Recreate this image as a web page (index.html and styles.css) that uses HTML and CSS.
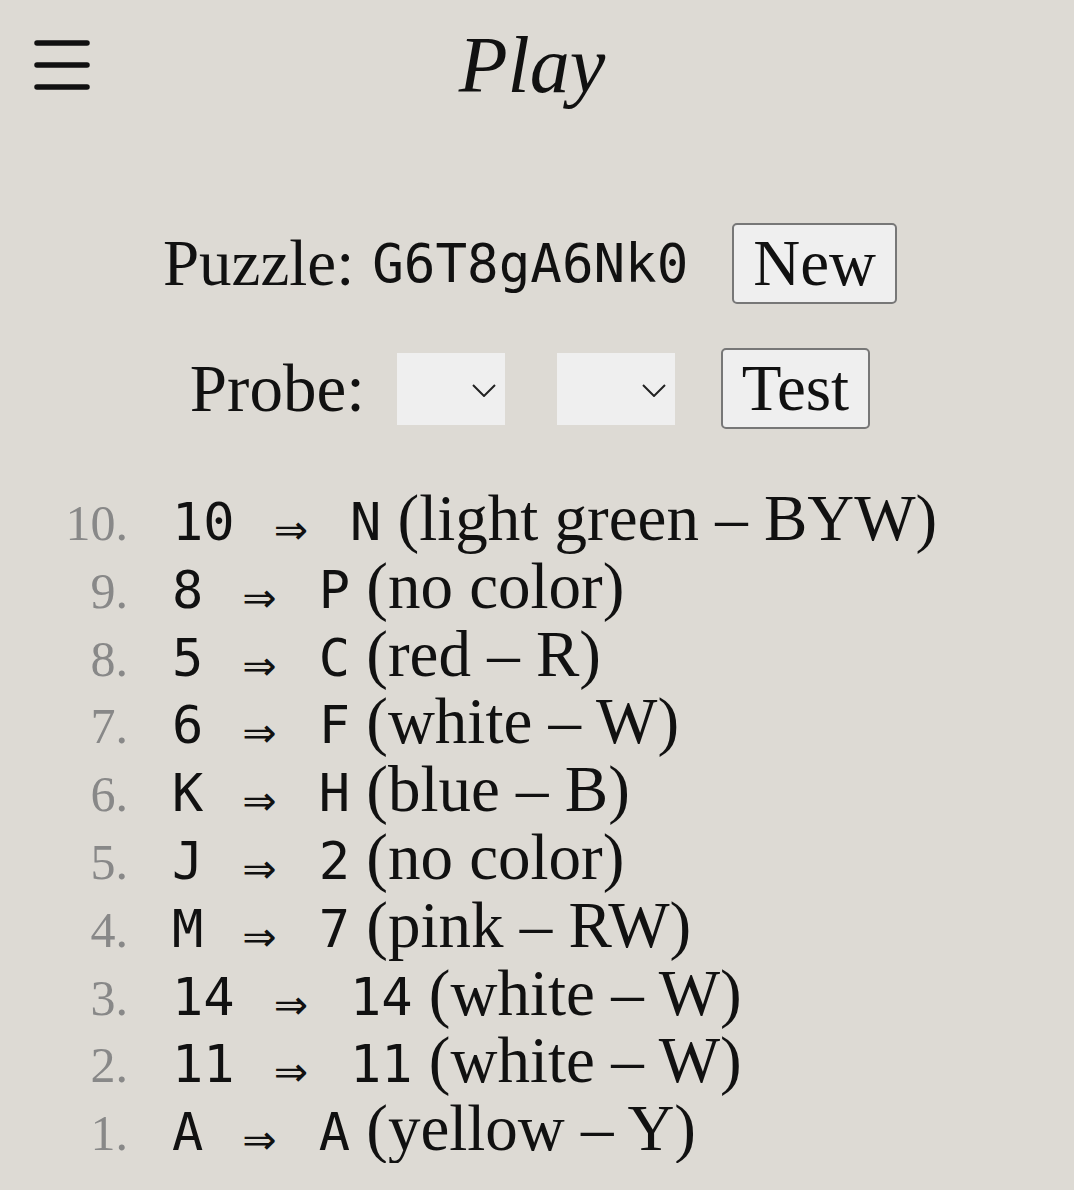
FILE: index.html
```html
<!DOCTYPE html>
<html lang="en">
<head>
    <meta charset="UTF-8">
    <meta name="viewport" content="width=device-width, initial-scale=1.0">
    <title>Play</title>
    <link rel="stylesheet" href="styles.css">
</head>
<body>
    <header class="topbar">
        <button class="menu-btn" aria-label="Menu">
            <svg width="56" height="50" viewBox="0 0 56 50">
                <path d="M3 3H53M3 25H53M3 47H53" stroke="#111" stroke-width="5.5" stroke-linecap="round" fill="none"/>
            </svg>
        </button>
        <h1 class="title">Play</h1>
        <span></span>
    </header>

    <main class="play">
        <div class="row puzzle-row">
            <span class="label">Puzzle:</span>
            <code class="puzzle-id">G6T8gA6Nk0</code>
            <button class="btn" id="newPuzzle">New</button>
        </div>

        <div class="row probe-row">
            <span class="label">Probe:</span>
            <span class="select-wrap pick-a">
                <select id="probeFrom"></select>
                <svg class="chevron" width="24" height="13" viewBox="0 0 24 13"><path d="M1 1L12 12L23 1" stroke="#222" stroke-width="2" fill="none"/></svg>
            </span>
            <span class="select-wrap pick-b">
                <select id="probeTo"></select>
                <svg class="chevron" width="24" height="13" viewBox="0 0 24 13"><path d="M1 1L12 12L23 1" stroke="#222" stroke-width="2" fill="none"/></svg>
            </span>
            <button class="btn" id="testProbe">Test</button>
        </div>

        <ol class="history" reversed>
            <li><span class="num">10.</span><code class="sym">10</code><span class="arrow">⇒</span><code class="sym">N</code> (light green – BYW)</li>
            <li><span class="num">9.</span><code class="sym">8</code><span class="arrow">⇒</span><code class="sym">P</code> (no color)</li>
            <li><span class="num">8.</span><code class="sym">5</code><span class="arrow">⇒</span><code class="sym">C</code> (red – R)</li>
            <li><span class="num">7.</span><code class="sym">6</code><span class="arrow">⇒</span><code class="sym">F</code> (white – W)</li>
            <li><span class="num">6.</span><code class="sym">K</code><span class="arrow">⇒</span><code class="sym">H</code> (blue – B)</li>
            <li><span class="num">5.</span><code class="sym">J</code><span class="arrow">⇒</span><code class="sym">2</code> (no color)</li>
            <li><span class="num">4.</span><code class="sym">M</code><span class="arrow">⇒</span><code class="sym">7</code> (pink – RW)</li>
            <li><span class="num">3.</span><code class="sym">14</code><span class="arrow">⇒</span><code class="sym">14</code> (white – W)</li>
            <li><span class="num">2.</span><code class="sym">11</code><span class="arrow">⇒</span><code class="sym">11</code> (white – W)</li>
            <li><span class="num">1.</span><code class="sym">A</code><span class="arrow">⇒</span><code class="sym">A</code> (yellow – Y)</li>
        </ol>
    </main>
</body>
</html>
```

FILE: styles.css
```css
body {
    margin: 0;
    background-color: #dddad4;
    font-family: "Liberation Serif", serif;
    font-size: 65px;
    color: #111;
}
.topbar {
    display: grid;
    grid-template-columns: 1fr auto 1fr;
    height: 130px;
    padding-right: 10px;
}
.menu-btn {
    justify-self: start;
    align-self: start;
    display: block;
    margin: 40px 0 0 34px;
    padding: 0;
    border: none;
    background: none;
}
.menu-btn svg {
    display: block;
}
.title {
    margin: 0;
    font-size: 80px;
    font-style: italic;
    font-weight: normal;
    line-height: 130px;
}
.row {
    display: flex;
    justify-content: center;
    align-items: center;
    height: 81px;
    padding-right: 14px;
}
.puzzle-row {
    margin-top: 93px;
}
.puzzle-row .label {
    margin-right: 18px;
}
.puzzle-id {
    font-family: "DejaVu Sans Mono", monospace;
    font-size: 52.5px;
}
.puzzle-row .btn {
    margin-left: 44px;
}
.btn {
    font-family: inherit;
    font-size: 65px;
    line-height: 1.15;
    padding: 1px 19px;
    background-color: #efefef;
    color: #111;
    border: 2px solid #777;
    border-radius: 5px;
}
.probe-row {
    margin-top: 44px;
}
.probe-row .label {
    font-size: 67px;
    margin-right: 32px;
}
.select-wrap {
    position: relative;
    display: block;
}
.select-wrap select {
    display: block;
    appearance: none;
    height: 72px;
    border: none;
    border-radius: 0;
    background-color: #efefef;
}
.pick-a select {
    width: 108px;
}
.pick-b {
    margin-left: 52px;
}
.pick-b select {
    width: 118px;
}
.chevron {
    position: absolute;
    right: 9px;
    top: 31px;
}
.probe-row .btn {
    margin-left: 46px;
}
.history {
    list-style: none;
    margin: 56px 0 0;
    padding: 0 0 0 28px;
    line-height: 67.8px;
}
.num {
    display: inline-block;
    width: 100px;
    margin-right: 44px;
    text-align: right;
    font-size: 50px;
    line-height: 1;
    color: #888;
}
.sym {
    font-family: "DejaVu Sans Mono", monospace;
    font-size: 52px;
    line-height: 1;
}
.arrow {
    font-family: "DejaVu Sans", sans-serif;
    font-size: 41px;
    line-height: 1;
    vertical-align: -4px;
    margin: 0 42px 0 39px;
}
```
